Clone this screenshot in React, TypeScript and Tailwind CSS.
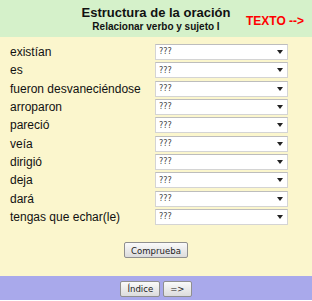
const verbos = [
  "existían",
  "es",
  "fueron desvaneciéndose",
  "arroparon",
  "pareció",
  "veía",
  "dirigió",
  "deja",
  "dará",
  "tengas que echar(le)",
];

function Desplegable() {
  return (
    <div className="flex h-[16px] w-[133px] items-center justify-between border border-[#d4d4d4] border-t-[#bdbdbd] bg-white pl-[3px] pr-[4px] font-['DejaVu_Sans_Condensed','Liberation_Sans',sans-serif] text-[9px] text-[#444]">
      <span>???</span>
      <span className="h-0 w-0 border-x-[3px] border-t-[4px] border-x-transparent border-t-[#222]" />
    </div>
  );
}

function Boton({ children }: { children: React.ReactNode }) {
  return (
    <button className="h-[16px] rounded-[2px] border border-[#8f8f8f] bg-gradient-to-b from-[#fafafa] to-[#dcdcdc] px-[6px] font-['DejaVu_Sans_Condensed','Liberation_Sans',sans-serif] text-[9.5px] leading-none text-[#222]">
      {children}
    </button>
  );
}

export default function App() {
  return (
    <div className="flex h-[300px] w-[312px] flex-col font-['Liberation_Sans',Arial,sans-serif]">
      <header className="relative flex h-[37px] flex-col items-center bg-[#d5f1ca] pt-[5px]">
        <h1 className="text-[13px] font-bold leading-[16px] text-[#111]">Estructura de la oración</h1>
        <h2 className="text-[10px] font-bold leading-[12px] text-[#111]">Relacionar verbo y sujeto I</h2>
        <span className="absolute left-[246px] top-[14px] text-[12px] font-bold leading-[14px] text-[#f00]">
          TEXTO --&gt;
        </span>
      </header>

      <main className="flex flex-1 flex-col bg-[#fbf6cd] pt-[7px]">
        <div className="flex flex-col">
          {verbos.map((v) => (
            <div key={v} className="flex h-[18.33px] items-start">
              <span className="w-[155px] pl-[10px] text-[12px] leading-[16px] text-[#111]">{v}</span>
              <Desplegable />
            </div>
          ))}
        </div>
        <div className="mt-[15px] flex justify-center">
          <Boton>Comprueba</Boton>
        </div>
      </main>

      <footer className="flex h-[24px] items-center justify-center gap-[3px] bg-[#a9a9eb] pt-[1px]">
        <Boton>Índice</Boton>
        <Boton>=&gt;</Boton>
      </footer>
    </div>
  );
}
